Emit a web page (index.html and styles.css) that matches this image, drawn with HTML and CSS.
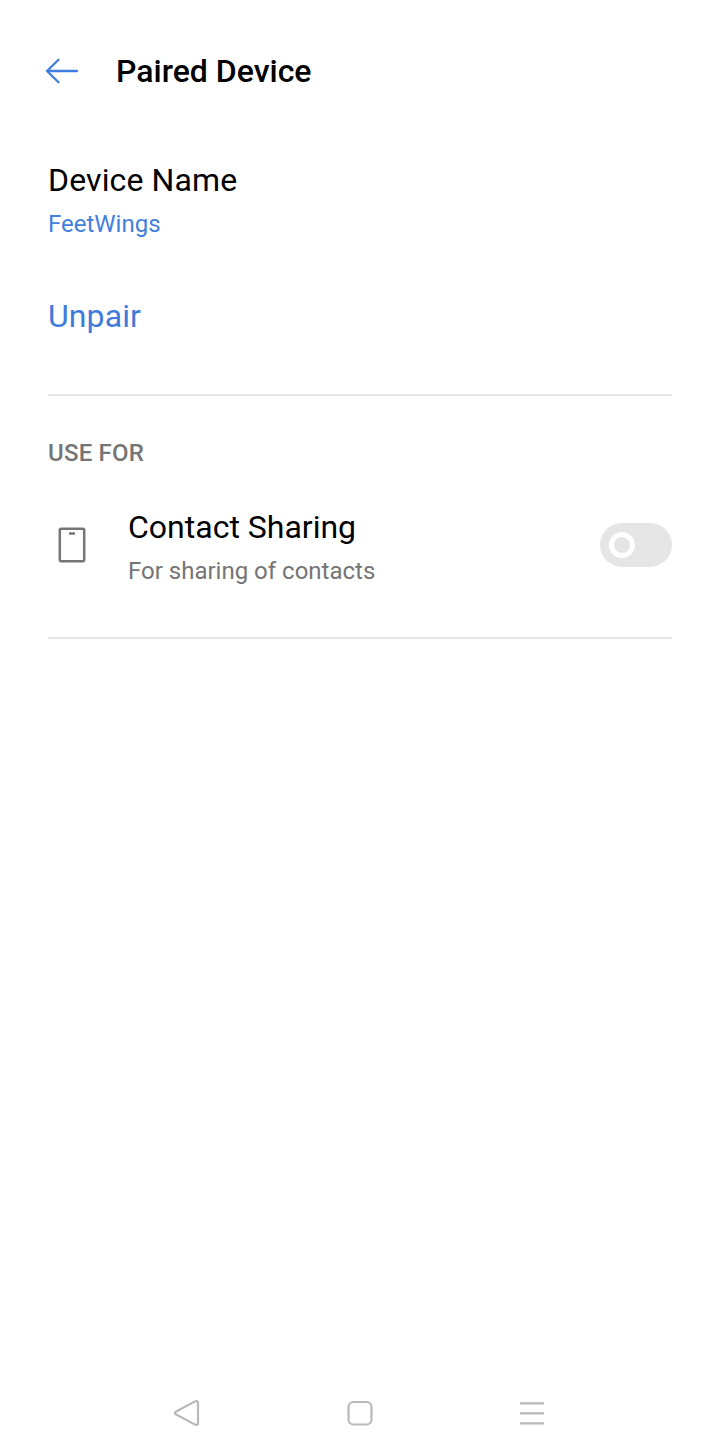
FILE: index.html
```html
<!DOCTYPE html>
<html lang="en">
<head>
<meta charset="utf-8">
<title>Paired Device</title>
<link rel="stylesheet" href="styles.css">
</head>
<body>
<div class="screen">
  <header class="bar">
    <svg class="back" width="34" height="28" viewBox="0 0 34 28"><path d="M13.500 2.800 2 14 13.500 25.200M2 14H32"/></svg>
    <h1 class="title">Paired Device</h1>
  </header>
  <main class="content">
    <section class="device">
      <div class="label">Device Name</div>
      <div class="name">FeetWings</div>
    </section>
    <a class="unpair">Unpair</a>
    <hr class="rule">
    <h2 class="heading">USE FOR</h2>
    <section class="row">
      <svg class="phone" width="28" height="36" viewBox="0 0 28 36"><rect x="1.800" y="1.800" width="24.400" height="32.400" rx="1.500"/><path d="M11 6.500h6"/></svg>
      <div class="text">
        <div class="label label-wide">Contact Sharing</div>
        <div class="hint">For sharing of contacts</div>
      </div>
      <span class="switch"><span class="knob"></span></span>
    </section>
    <hr class="rule">
  </main>
  <nav class="nav">
    <svg width="28" height="28" viewBox="0 0 28 28"><path d="M2.800 12.700 22 2.400Q25 1.200 25 4V24Q25 26.800 22 25.600L2.800 15.300Q.8 14 2.800 12.700Z"/></svg>
    <svg width="28" height="28" viewBox="0 0 28 28"><rect x="3.500" y="3" width="23" height="22.500" rx="5"/></svg>
    <svg width="28" height="28" viewBox="0 0 28 28"><path d="M3 4.300H27M3 14.300H27M3 24.300H27"/></svg>
  </nav>
</div>
</body>
</html>
```
FILE: styles.css
```css
body { margin: 0; background: #fff; font-family: Roboto, sans-serif; color: #000; }
.screen { height: 1456px; display: flex; flex-direction: column; overflow: hidden; }
.bar { display: flex; align-items: center; height: 56px; padding: 43px 0 0 45px; gap: 37px; }
.back { fill: none; stroke: #3f7de0; stroke-width: 2.3; stroke-linecap: round; stroke-linejoin: round; }
.title { margin: 0; font-size: 32px; line-height: 40px; font-weight: 500; }
.content { flex: 1; padding: 61px 43px 0 48px; }
.label { font-size: 32px; line-height: 40px; letter-spacing: .13px; }
.label-wide { letter-spacing: 0; }
.name, .hint { font-size: 24px; line-height: 32px; margin-top: 8px; color: #427fdd; }
.hint { color: #757575; }
.unpair { display: block; margin-top: 56px; font-size: 32px; line-height: 40px; color: #3f7bdb; letter-spacing: .1px; }
.rule { margin: 58px 0 0; border: 0; height: 2px; background: #e5e5e5; }
.heading { margin: 41px 0 0; font-size: 24px; line-height: 32px; font-weight: 500; letter-spacing: .2px; color: #757575; }
.row { display: flex; align-items: center; height: 80px; margin-top: 38px; padding-left: 10px; }
.row + .rule { margin-top: 50px; }
.phone { margin-bottom: 4px; fill: none; stroke: #757575; stroke-width: 2.5; }
.text { flex: 1; margin-left: 42px; }
.switch { width: 72px; height: 44px; margin-bottom: 4px; border-radius: 22px; background: #e5e5e5; display: flex; align-items: center; }
.knob { box-sizing: border-box; width: 26px; height: 26px; margin-left: 9px; border: 5px solid #fff; border-radius: 50%; }
.nav { display: flex; gap: 144px; padding: 0 0 29px 173px; }
.nav svg { fill: none; stroke: #b8b8b8; stroke-width: 2.2; }
```
